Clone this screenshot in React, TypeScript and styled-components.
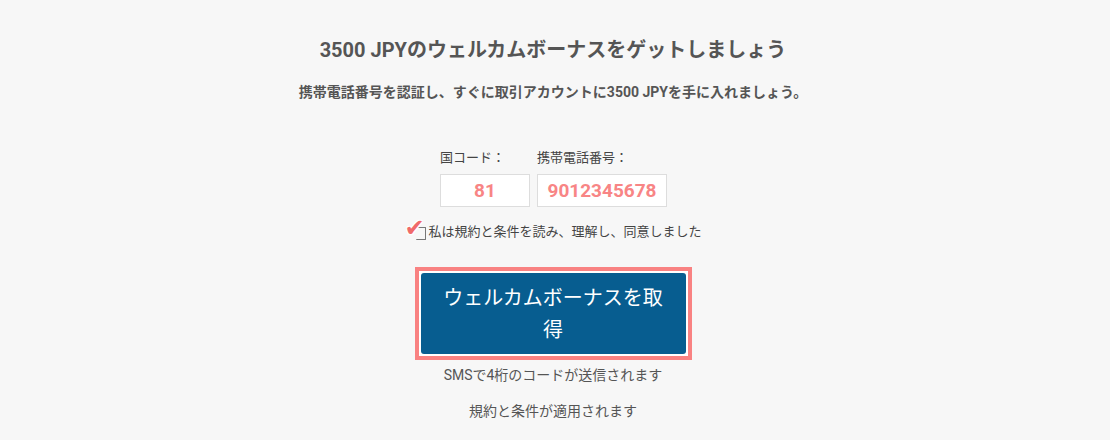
import React, { useState } from 'react';
import { createGlobalStyle, styled } from 'styled-components';

const GlobalStyle = createGlobalStyle`
    html, body {
        margin: 0;
        padding: 0;
        background: #f7f7f7;
    }
    body {
        font-family: Roboto, 'Liberation Sans', 'Noto Sans CJK JP', sans-serif;
        color: #555;
    }
`;

const App = () => {
    const [code, setCode] = useState('81');
    const [phone, setPhone] = useState('9012345678');
    const [agree, setAgree] = useState(true);

    return (
        <>
            <GlobalStyle />
            <Page>
                <Title>3500 JPYのウェルカムボーナスをゲットしましょう</Title>
                <Lead>携帯電話番号を認証し、すぐに取引アカウントに3500 JPYを手に入れましょう。</Lead>

                <Fields>
                    <Field>
                        <label>国コード：</label>
                        <Input $width={90} value={code} onChange={(e) => setCode(e.target.value)} />
                    </Field>
                    <Field>
                        <label>携帯電話番号：</label>
                        <Input $width={130} value={phone} onChange={(e) => setPhone(e.target.value)} />
                    </Field>
                </Fields>

                <Agree onClick={() => setAgree(!agree)}>
                    <span className="box">
                        {agree && <span className="check">✔</span>}
                    </span>
                    私は規約と条件を読み、理解し、同意しました
                </Agree>

                <ButtonFrame>
                    <Button>ウェルカムボーナスを取得</Button>
                </ButtonFrame>

                <Note>SMSで4桁のコードが送信されます</Note>
                <Note className="terms">規約と条件が適用されます</Note>
            </Page>
        </>
    );
};

const Page = styled.div`
    display: flex;
    flex-direction: column;
    align-items: center;
    padding-top: 36px;
    padding-right: 4px;
`;

const Title = styled.h1`
    margin: 0;
    font-size: 20px;
    font-weight: bold;
    line-height: 28px;
    color: #555;
`;

const Lead = styled.p`
    margin: 18px 0 0;
    font-size: 14px;
    font-weight: bold;
    line-height: 20px;
    color: #555;
`;

const Fields = styled.div`
    display: flex;
    gap: 7px;
    margin-top: 47px;
    margin-left: 1px;
`;

const Field = styled.div`
    display: flex;
    flex-direction: column;
    gap: 7px;
    label {
        font-size: 13px;
        line-height: 18px;
        color: #444;
    }
`;

const Input = styled.input<{ $width: number }>`
    box-sizing: border-box;
    width: ${(p) => p.$width}px;
    height: 33px;
    border: 1px solid #ddd;
    background: #fff;
    text-align: center;
    font-family: Roboto, 'Liberation Sans', sans-serif;
    font-size: 19px;
    font-weight: bold;
    color: #f88585;
    outline: none;
    padding: 0 4px;
`;

const Agree = styled.div`
    display: flex;
    align-items: center;
    margin-top: 15px;
    font-size: 13px;
    line-height: 20px;
    color: #444;
    cursor: pointer;
    .box {
        position: relative;
        display: inline-block;
        width: 9px;
        height: 11px;
        margin: 2px 2px 0 12px;
        border: 1px solid #777;
        border-left: none;
        border-radius: 1px;
    }
    .check {
        position: absolute;
        left: -12px;
        top: -12px;
        font-size: 24px;
        line-height: 24px;
        color: #f06a6a;
        font-family: 'DejaVu Sans', sans-serif;
        text-shadow: 1px 1px 0 #fff, -1px -1px 0 #fff, 1px -1px 0 #fff, -1px 1px 0 #fff;
    }
`;

const ButtonFrame = styled.div`
    margin-top: 25px;
    padding: 2px;
    border: 4px solid #f98282;
    background: #fff;
`;

const Button = styled.button`
    display: block;
    box-sizing: border-box;
    width: 265px;
    height: 81px;
    padding: 0 16px;
    border: none;
    border-radius: 3px;
    background: #075d90;
    color: #fff;
    font-family: Roboto, 'Noto Sans CJK JP', sans-serif;
    font-size: 20px;
    line-height: 32px;
    cursor: pointer;
`;

const Note = styled.p`
    margin: 5px 0 0;
    font-size: 14px;
    line-height: 20px;
    color: #555;
    &.terms {
        margin-top: 16px;
    }
`;

export default App;
